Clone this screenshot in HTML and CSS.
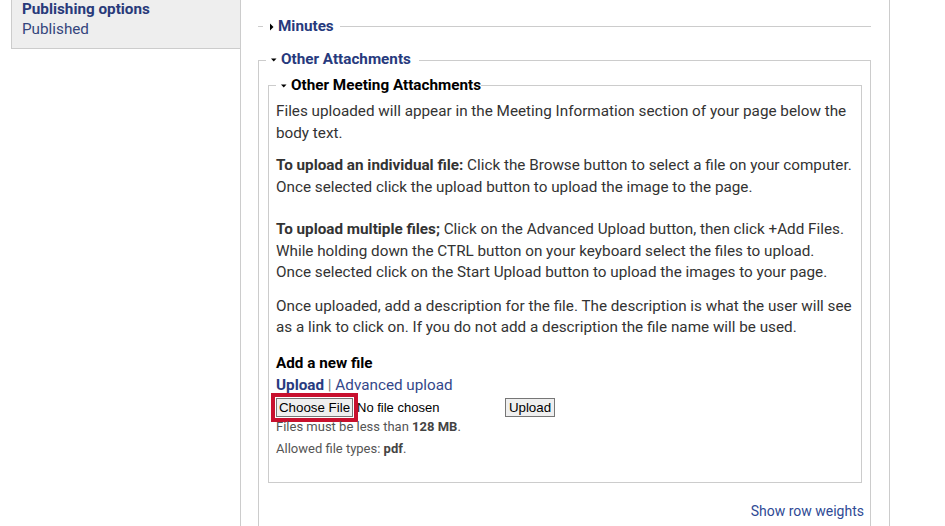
FILE: index.html
```html
<!DOCTYPE html>
<html lang="en">
<head>
<meta charset="utf-8">
<title>Other Attachments</title>
<link rel="stylesheet" href="styles.css">
</head>
<body>
<div class="layout">
  <aside class="sidebar">
    <div class="side-title">Publishing options</div>
    <div class="side-value">Published</div>
  </aside>
  <main class="main">
    <fieldset class="fs fs-collapsed">
      <legend class="lg lg-min"><svg class="arrow" width="8" height="8" viewBox="0 0 8 8"><polygon points="3,0.5 6.5,4 3,7.5" fill="#000"/></svg><span class="lg-text">Minutes</span></legend>
    </fieldset>
    <fieldset class="fs fs-outer">
      <legend class="lg lg-outer"><svg class="arrow" width="8" height="8" viewBox="0 0 8 8"><polygon points="1,2.5 6.5,2.5 3.75,5.5" fill="#000"/></svg><span class="lg-text">Other Attachments</span></legend>
      <fieldset class="fs fs-inner">
        <legend class="lg lg-inner"><svg class="arrow" width="8" height="8" viewBox="0 0 8 8"><polygon points="1,2.5 6.5,2.5 3.75,5.5" fill="#000"/></svg><span class="lg-text">Other Meeting Attachments</span></legend>
        <p class="p p1">Files uploaded will appear in the Meeting Information section of your page below the body text.</p>
        <p class="p p2"><strong>To upload an individual file:</strong> Click the Browse button to select a file on your computer.<br>Once selected click the upload button to upload the image to the page.</p>
        <p class="p p3"><strong>To upload multiple files;</strong> Click on the Advanced Upload button, then click +Add Files.<br>While holding down the CTRL button on your keyboard select the files to upload.<br>Once selected click on the Start Upload button to upload the images to your page.</p>
        <p class="p p4">Once uploaded, add a description for the file. The description is what the user will see as a link to click on. If you do not add a description the file name will be used.</p>
        <div class="form-item">
          <div class="label">Add a new file</div>
          <div class="modes"><a class="mode active" href="#">Upload</a> <span class="sep">|</span> <a class="mode" href="#">Advanced upload</a></div>
          <div class="file-row">
            <div class="file-input">
              <button class="btn btn-choose" type="button">Choose File</button>
              <span class="no-file">No file chosen</span>
            </div>
            <button class="btn btn-upload" type="button">Upload</button>
          </div>
          <div class="desc desc1">Files must be less than <strong>128 MB</strong>.</div>
          <div class="desc desc2">Allowed file types: <strong>pdf</strong>.</div>
        </div>
      </fieldset>
      <div class="weights"><a href="#">Show row weights</a></div>
    </fieldset>
  </main>
</div>
</body>
</html>
```
FILE: styles.css
```css
* { box-sizing: border-box; }
html, body { margin: 0; padding: 0; background: #fff; }
body {
  font-family: Roboto, "Liberation Sans", Arial, sans-serif;
  font-size: 15.25px;
  line-height: 21.45px;
  color: #333;
  overflow: hidden;
  height: 526px;
}
a { text-decoration: none; }

.layout {
  display: flex;
  align-items: stretch;
  height: 526px;
}

.sidebar {
  align-self: flex-start;
  margin-left: 11px;
  width: 229px;
  background: #eee;
  border-left: 1px solid #ccc;
  border-bottom: 1px solid #ccc;
  padding: 0 10px 9px 10px;
  line-height: 20px;
  color: #2c3c78;
}
.side-title { font-weight: bold; color: #283a7a; margin-top: -1px; }
.side-value { color: #34457c; }

.main {
  width: 650px;
  border-left: 1px solid #ccc;
  border-right: 1px solid #ccc;
  padding: 16px 18px 0 17px;
}

.fs {
  margin: 0 0 12px 0;
  border: 1px solid #ccc;
  min-width: 0;
}
.fs-collapsed {
  border-width: 1px 0 0 0;
  padding: 0 0 0 5px;
}
.fs-outer {
  padding: 4px 8px 24px 9px;
}
.fs-inner {
  margin: 0;
  padding: 5px 3px 24px 7px;
}

.lg {
  font-weight: bold;
  color: #273a7d;
  padding: 0 6px 0 4px;
  display: flex;
  align-items: center;
}
.lg-outer { margin-left: -2px; padding-right: 8px; }
.lg-inner { color: #000; padding-right: 0; }
.arrow { display: block; margin-right: 3px; flex: none; }

.p { margin: 0; }
.p1 { margin-bottom: 11px; }
.p2 { margin-bottom: 21px; }
.p3 { margin-bottom: 12px; }
.p4 { margin-bottom: 15px; }

.label { font-weight: bold; color: #000; }
.modes { color: #666; }
.mode { color: #34478a; }
.mode.active { font-weight: bold; color: #283b80; }
.sep { color: #777; }

.file-row {
  display: flex;
  align-items: center;
  height: 19px;
  margin-top: 2px;
}
.file-input {
  display: flex;
  align-items: center;
  width: 229px;
}
.btn {
  font-family: "Liberation Sans", Arial, sans-serif;
  font-size: 13.33px;
  line-height: 15px;
  color: #000;
  background: #efefef;
  border: 1px solid #767676;
  border-radius: 0;
  height: 19px;
  padding: 0;
  margin: 0;
  white-space: nowrap;
  text-align: center;
}
.btn-choose {
  width: 77px;
  outline: 4px solid #c8102e;
  outline-offset: 1px;
}
.no-file {
  font-family: "Liberation Sans", Arial, sans-serif;
  font-size: 13px;
  color: #000;
  margin-left: 4px;
  white-space: nowrap;
}
.btn-upload { width: 50px; }

.desc {
  font-size: 13px;
  line-height: 18px;
  color: #555;
}
.desc strong { color: #444; }
.desc1 { margin-top: 1px; }
.desc2 { margin-top: 4px; }

.weights {
  text-align: right;
  margin: 18px -2px 0 0;
  font-size: 14px;
}
.weights a { color: #2f4a95; }
```
